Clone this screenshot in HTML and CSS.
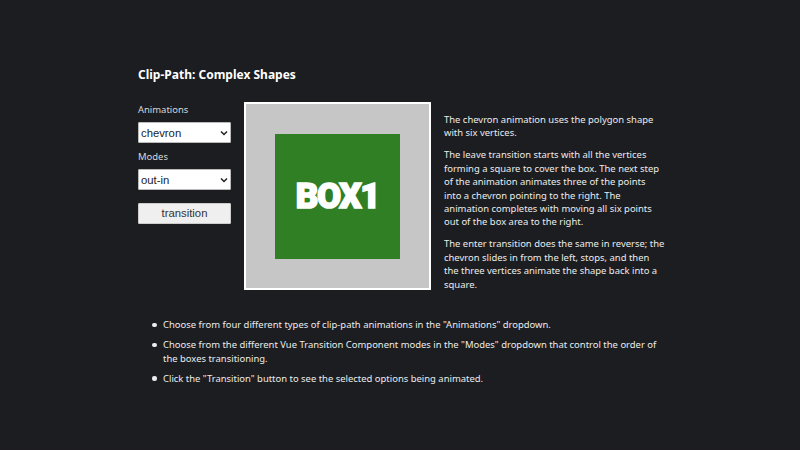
FILE: index.html
```html
<!DOCTYPE html>
<html lang="en">
<head>
<meta charset="utf-8">
<title>Clip-Path: Complex Shapes</title>
<link rel="stylesheet" href="styles.css">
</head>
<body>
<main class="page">
  <h1 class="title">Clip-Path: Complex Shapes</h1>
  <div class="row">
    <div class="controls">
      <label class="label" for="anim">Animations</label>
      <select class="select" id="anim"><option>chevron</option></select>
      <label class="label" for="mode">Modes</label>
      <select class="select" id="mode"><option>out-in</option></select>
      <button class="button">transition</button>
    </div>
    <div class="stage"><div class="box"><span class="box-text">BOX1</span></div></div>
    <div class="desc">
      <p>The chevron animation uses the polygon shape with six vertices.</p>
      <p>The leave transition starts with all the vertices forming a square to cover the box. The next step of the animation animates three of the points into a chevron pointing to the right. The animation completes with moving all six points out of the box area to the right.</p>
      <p>The enter transition does the same in reverse; the chevron slides in from the left, stops, and then the three vertices animate the shape back into a square.</p>
    </div>
  </div>
  <ul class="notes">
    <li>Choose from four different types of clip-path animations in the "Animations" dropdown.</li>
    <li>Choose from the different Vue Transition Component modes in the "Modes" dropdown that control the order of the boxes transitioning.</li>
    <li>Click the "Transition" button to see the selected options being animated.</li>
  </ul>
</main>
</body>
</html>
```
FILE: styles.css
```css
* { box-sizing: border-box; }
html, body { margin: 0; height: 100%; }
body {
  background: #1b1d21;
  color: #ececec;
  font-family: "Noto Sans", sans-serif;
  font-size: 9.45px;
  line-height: 13.4px;
}
.page { width: 530px; margin-left: 138px; padding-top: 67px; }
.title { margin: 0 0 19px; font-size: 12px; line-height: 16px; font-weight: 700; color: #fff; }
.row { display: flex; align-items: flex-start; }
.controls { width: 93px; margin-right: 13px; padding-top: 1px; display: flex; flex-direction: column; }
.label { height: 13px; margin-bottom: 6px; color: #d8d8d8; }
.select {
  appearance: none;
  height: 21px; width: 93px; margin-bottom: 7px;
  background: #fff url("data:image/svg+xml,%3Csvg xmlns='http://www.w3.org/2000/svg' width='8' height='6'%3E%3Cpath d='M1 1.5l3 3 3-3' fill='none' stroke='%23222' stroke-width='1.5'/%3E%3C/svg%3E") no-repeat right 2px center;
  color: #222; border: 1px solid #bbb; border-radius: 1px;
  font-family: "Liberation Sans", sans-serif; font-size: 11.3px; padding: 0 0 0 2px;
}
.button {
  height: 21px; width: 93px; margin-top: 6px;
  background: #efefef; color: #333; border: 1px solid #ccc; border-radius: 1px;
  font-family: "Liberation Sans", sans-serif; font-size: 11.3px; padding: 0 0 2px;
}
.stage {
  width: 187px; height: 188px; flex: none;
  background: #c6c6c6; border: 2px solid #fff;
  display: flex; align-items: center; justify-content: center;
}
.box {
  width: 125px; height: 125px; background: #317f25;
  display: flex; align-items: center; justify-content: center;
}
.box-text {
  color: #fff; font-family: Roboto, sans-serif; font-weight: 900; font-size: 35px; line-height: 35px;
  letter-spacing: -1.4px; -webkit-text-stroke: 1.6px #fff;
}
.desc { width: 221px; flex: none; margin-left: 13px; padding-top: 11px; }
.desc p { margin: 0 0 8.6px; }
.notes { margin: 18.5px 0 0; padding: 0 0 0 14px; list-style: none; }
.notes li { display: flex; gap: 6.5px; margin-bottom: 6.6px; }
.notes li::before {
  content: ""; flex: none; width: 4.5px; height: 4.5px; margin-top: 4.5px;
  border-radius: 50%; background: #ececec;
}
```
